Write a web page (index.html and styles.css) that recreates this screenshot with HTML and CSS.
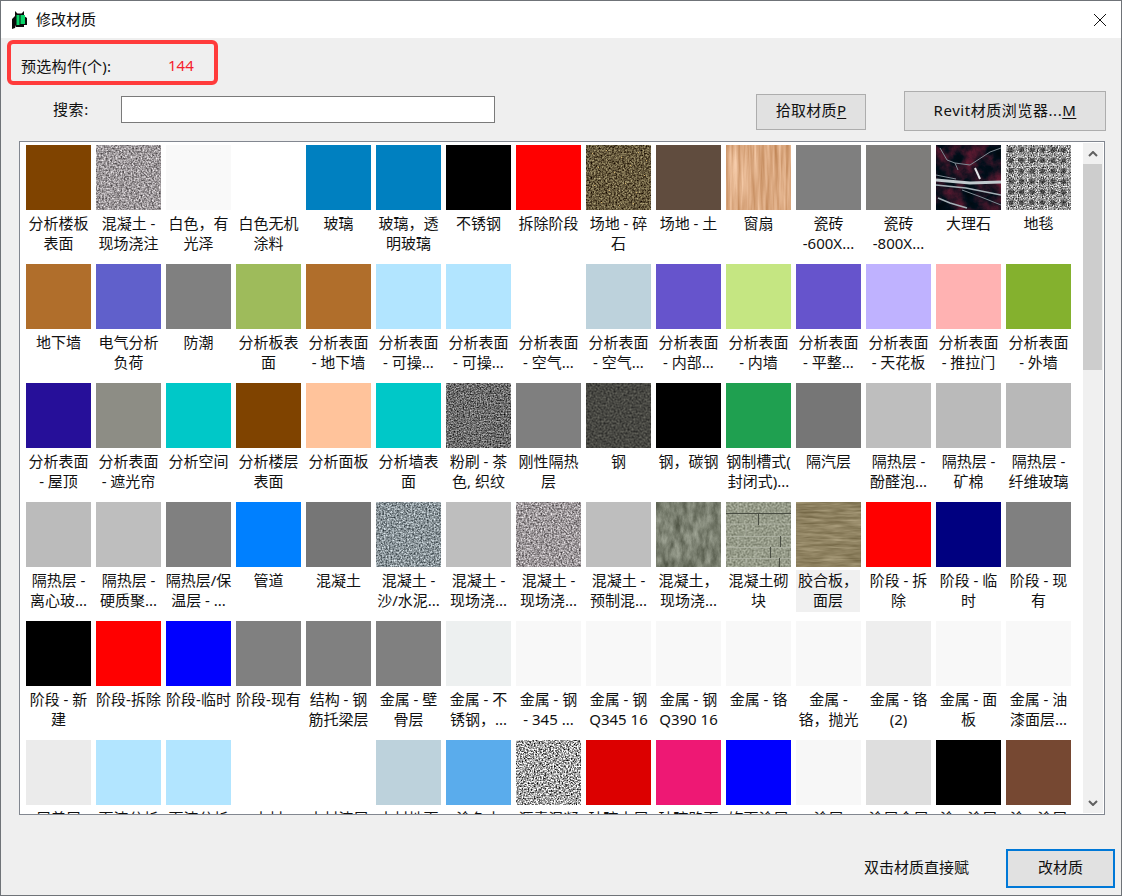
FILE: index.html
```html
<!DOCTYPE html>
<html lang="zh-CN">
<head>
<meta charset="utf-8">
<title>修改材质</title>
<link rel="stylesheet" href="styles.css">
</head>
<body>
<svg class="defs" aria-hidden="true">
  <defs>
    <filter id="f-concrete" x="0" y="0" width="100%" height="100%" color-interpolation-filters="sRGB"><feTurbulence type="fractalNoise" baseFrequency="0.6" numOctaves="2" seed="3"/><feColorMatrix values="1.05 0 0 0 .09  1.05 0 0 0 .07  1.05 0 0 0 .08  0 0 0 0 1"/></filter>
    <filter id="f-sand" x="0" y="0" width="100%" height="100%" color-interpolation-filters="sRGB"><feTurbulence type="fractalNoise" baseFrequency="0.6" numOctaves="2" seed="8"/><feColorMatrix values="1.1 0 0 0 -.01  1.1 0 0 0 .03  1.1 0 0 0 .05  0 0 0 0 1"/></filter>
    <filter id="f-dark" x="0" y="0" width="100%" height="100%" color-interpolation-filters="sRGB"><feTurbulence type="fractalNoise" baseFrequency="0.7" numOctaves="2" seed="11"/><feColorMatrix values="1.05 0 0 0 -.1  1.05 0 0 0 -.1  1.05 0 0 0 -.1  0 0 0 0 1"/></filter>
    <filter id="f-carpet" x="0" y="0" width="100%" height="100%" color-interpolation-filters="sRGB"><feTurbulence type="fractalNoise" baseFrequency="0.8" numOctaves="2" seed="17"/><feColorMatrix values="1.6 0 0 0 -.2  1.6 0 0 0 -.2  1.6 0 0 0 -.2  0 0 0 0 1"/></filter>
    <filter id="f-bw" x="0" y="0" width="100%" height="100%" color-interpolation-filters="sRGB"><feTurbulence type="fractalNoise" baseFrequency="0.65" numOctaves="2" seed="5"/><feColorMatrix values="2.1 0 0 0 -.4  2.1 0 0 0 -.4  2.1 0 0 0 -.4  0 0 0 0 1"/></filter>
    <filter id="f-gravel" x="0" y="0" width="100%" height="100%" color-interpolation-filters="sRGB"><feTurbulence type="fractalNoise" baseFrequency="0.6" numOctaves="2" seed="14"/><feColorMatrix values="1 0 0 0 -.1  1 0 0 0 -.15  .8 0 0 0 -.16  0 0 0 0 1"/></filter>
    <filter id="f-wood" x="0" y="0" width="100%" height="100%" color-interpolation-filters="sRGB"><feTurbulence type="fractalNoise" baseFrequency="0.25 0.015" numOctaves="3" seed="6"/><feColorMatrix values=".32 0 0 0 .69  .42 0 0 0 .44  .5 0 0 0 .24  0 0 0 0 1"/></filter>
    <filter id="f-steel" x="0" y="0" width="100%" height="100%" color-interpolation-filters="sRGB"><feTurbulence type="fractalNoise" baseFrequency="0.5" numOctaves="4" seed="21"/><feColorMatrix values=".38 0 0 0 .09  .38 0 0 0 .09  .34 0 0 0 .09  0 0 0 0 1"/></filter>
    <filter id="f-mottled" x="0" y="0" width="100%" height="100%" color-interpolation-filters="sRGB"><feTurbulence type="fractalNoise" baseFrequency="0.16 0.07" numOctaves="6" seed="9"/><feColorMatrix values=".42 0 0 0 .27  .42 0 0 0 .29  .42 0 0 0 .23  0 0 0 0 1"/></filter>
    <filter id="f-block" x="0" y="0" width="100%" height="100%" color-interpolation-filters="sRGB"><feTurbulence type="fractalNoise" baseFrequency="0.5" numOctaves="2" seed="2"/><feColorMatrix values=".45 0 0 0 .36  .45 0 0 0 .38  .45 0 0 0 .31  0 0 0 0 1"/></filter>
    <filter id="f-ply" x="0" y="0" width="100%" height="100%" color-interpolation-filters="sRGB"><feTurbulence type="fractalNoise" baseFrequency="0.04 0.4" numOctaves="3" seed="4"/><feColorMatrix values=".3 0 0 0 .41  .3 0 0 0 .36  .3 0 0 0 .23  0 0 0 0 1"/></filter>
    <filter id="f-blotch" x="0" y="0" width="100%" height="100%" color-interpolation-filters="sRGB"><feTurbulence type="fractalNoise" baseFrequency="0.07" numOctaves="5" seed="12"/><feColorMatrix values=".8 0 0 0 -.28  .1 0 0 0 .02  .2 0 0 0 .03  0 0 0 0 1"/></filter>
    <pattern id="p-carpet" width="10.5" height="10.5" patternUnits="userSpaceOnUse"><circle cx="5" cy="5" r="2.6" class="carpet-dot"/></pattern>
  </defs>
</svg>

<div class="window">
  <header class="titlebar">
    <svg class="app-icon" viewBox="0 0 15 19"><path class="icon-black" d="M0 9 3 6V1L5.5 3.5H9.5L12 1V6L15 8V15H12V17H4V15L3 18 0 19Z"/><path class="icon-green" d="M4.500 5H7.500V15H4.500ZM8.500 5H13V14H8.500Z"/></svg>
    <span class="title">修改材质</span>
    <svg class="close" viewBox="0 0 12 12"><path d="M0 0 12 12M12 0 0 12"/></svg>
  </header>

  <main class="content">
    <div class="preselect">
      <span class="pre-label">预选构件(个):</span>
      <span class="pre-count">144</span>
    </div>

    <div class="toolbar">
      <label class="search-label" for="search">搜索:</label>
      <input class="search-input" id="search" type="text">
      <button class="btn btn-pick" type="button">拾取材质<u>P</u></button>
      <button class="btn btn-browser" type="button">Revit材质浏览器...<u>M</u></button>
    </div>

    <section class="list">
      <div class="grid">
        <div class="item"><div class="sw c-brown"></div><div class="label">分析楼板<br>表面</div></div>
        <div class="item"><svg class="sw" viewBox="0 0 65 65"><rect class="t-concrete" width="65" height="65"/></svg><div class="label">混凝土 -<br>现场浇注</div></div>
        <div class="item"><div class="sw c-f9"></div><div class="label">白色&#65292;有<br>光泽</div></div>
        <div class="item"><div class="sw c-white"></div><div class="label">白色无机<br>涂料</div></div>
        <div class="item"><div class="sw c-glass"></div><div class="label">玻璃</div></div>
        <div class="item"><div class="sw c-glass"></div><div class="label">玻璃&#65292;透<br>明玻璃</div></div>
        <div class="item"><div class="sw c-black"></div><div class="label">不锈钢</div></div>
        <div class="item"><div class="sw c-red"></div><div class="label">拆除阶段</div></div>
        <div class="item"><svg class="sw" viewBox="0 0 65 65"><rect class="t-gravel" width="65" height="65"/><path class="specks" d="M6 8h1v1H6zM20 5h1v1h-1zM35 12h1v1h-1zM52 7h1v1h-1zM12 22h1v1h-1zM28 27h1v1h-1zM44 20h1v1h-1zM58 30h1v1h-1zM8 40h1v1H8zM23 45h1v1h-1zM39 38h1v1h-1zM50 47h1v1h-1zM15 57h1v1h-1zM33 60h1v1h-1zM47 58h1v1h-1zM60 15h1v1h-1z"/></svg><div class="label">场地 - 碎<br>石</div></div>
        <div class="item"><div class="sw c-soil"></div><div class="label">场地 - 土</div></div>
        <div class="item"><svg class="sw" viewBox="0 0 65 65"><rect class="t-wood" width="65" height="65"/></svg><div class="label">窗扇</div></div>
        <div class="item"><div class="sw c-7f"></div><div class="label">瓷砖<br>-600X...</div></div>
        <div class="item"><div class="sw c-7e"></div><div class="label">瓷砖<br>-800X...</div></div>
        <div class="item"><svg class="sw" viewBox="0 0 65 65"><rect class="marble-bg" width="65" height="65"/><rect class="t-blotch" width="65" height="65"/><path class="vein" d="M4 3 11 15 19 18 22 25M19 18 34 20 54 7 65 3M26 45 45 52 65 60M0 30 20 34"/><path class="vein-thick" d="M39 23 44 34"/><path class="vein-band" d="M0 35 34 38 65 37"/><path class="vein-mid" d="M0 40 30 43 65 50M2 53 14 58 31 63"/></svg><div class="label">大理石</div></div>
        <div class="item"><svg class="sw" viewBox="0 0 65 65"><rect class="t-carpet" width="65" height="65"/><rect class="carpet-overlay" width="65" height="65"/></svg><div class="label">地毯</div></div>

        <div class="item"><div class="sw c-ochre"></div><div class="label">地下墙</div></div>
        <div class="item"><div class="sw c-indigo"></div><div class="label">电气分析<br>负荷</div></div>
        <div class="item"><div class="sw c-80"></div><div class="label">防潮</div></div>
        <div class="item"><div class="sw c-olive"></div><div class="label">分析板表<br>面</div></div>
        <div class="item"><div class="sw c-ochre"></div><div class="label">分析表面<br>- 地下墙</div></div>
        <div class="item"><div class="sw c-sky"></div><div class="label">分析表面<br>- 可操...</div></div>
        <div class="item"><div class="sw c-sky"></div><div class="label">分析表面<br>- 可操...</div></div>
        <div class="item"><div class="sw c-white"></div><div class="label">分析表面<br>- 空气...</div></div>
        <div class="item"><div class="sw c-mist"></div><div class="label">分析表面<br>- 空气...</div></div>
        <div class="item"><div class="sw c-violet"></div><div class="label">分析表面<br>- 内部...</div></div>
        <div class="item"><div class="sw c-lime"></div><div class="label">分析表面<br>- 内墙</div></div>
        <div class="item"><div class="sw c-violet"></div><div class="label">分析表面<br>- 平整...</div></div>
        <div class="item"><div class="sw c-lilac"></div><div class="label">分析表面<br>- 天花板</div></div>
        <div class="item"><div class="sw c-pink"></div><div class="label">分析表面<br>- 推拉门</div></div>
        <div class="item"><div class="sw c-grass"></div><div class="label">分析表面<br>- 外墙</div></div>

        <div class="item"><div class="sw c-navy2"></div><div class="label">分析表面<br>- 屋顶</div></div>
        <div class="item"><div class="sw c-taupe"></div><div class="label">分析表面<br>- 遮光帘</div></div>
        <div class="item"><div class="sw c-teal"></div><div class="label">分析空间</div></div>
        <div class="item"><div class="sw c-brown"></div><div class="label">分析楼层<br>表面</div></div>
        <div class="item"><div class="sw c-peach"></div><div class="label">分析面板</div></div>
        <div class="item"><div class="sw c-teal"></div><div class="label">分析墙表<br>面</div></div>
        <div class="item"><svg class="sw" viewBox="0 0 65 65"><rect class="t-dark" width="65" height="65"/></svg><div class="label">粉刷 - 茶<br>色, 织纹</div></div>
        <div class="item"><div class="sw c-7f"></div><div class="label">刚性隔热<br>层</div></div>
        <div class="item"><svg class="sw" viewBox="0 0 65 65"><rect class="t-steel" width="65" height="65"/></svg><div class="label">钢</div></div>
        <div class="item"><div class="sw c-black"></div><div class="label">钢&#65292;碳钢</div></div>
        <div class="item"><div class="sw c-green"></div><div class="label">钢制槽式(<br>封闭式)...</div></div>
        <div class="item"><div class="sw c-76"></div><div class="label">隔汽层</div></div>
        <div class="item"><div class="sw c-be"></div><div class="label">隔热层 -<br>酚醛泡...</div></div>
        <div class="item"><div class="sw c-ba"></div><div class="label">隔热层 -<br>矿棉</div></div>
        <div class="item"><div class="sw c-b8"></div><div class="label">隔热层 -<br>纤维玻璃</div></div>

        <div class="item"><div class="sw c-bb"></div><div class="label">隔热层 -<br>离心玻...</div></div>
        <div class="item"><div class="sw c-be"></div><div class="label">隔热层 -<br>硬质聚...</div></div>
        <div class="item"><div class="sw c-80"></div><div class="label">隔热层/保<br>温层 - ...</div></div>
        <div class="item"><div class="sw c-pipe"></div><div class="label">管道</div></div>
        <div class="item"><div class="sw c-76"></div><div class="label">混凝土</div></div>
        <div class="item"><svg class="sw" viewBox="0 0 65 65"><rect class="t-sand" width="65" height="65"/></svg><div class="label">混凝土 -<br>沙/水泥...</div></div>
        <div class="item"><div class="sw c-be"></div><div class="label">混凝土 -<br>现场浇...</div></div>
        <div class="item"><svg class="sw" viewBox="0 0 65 65"><rect class="t-concrete" width="65" height="65"/></svg><div class="label">混凝土 -<br>现场浇...</div></div>
        <div class="item"><div class="sw c-be"></div><div class="label">混凝土 -<br>预制混...</div></div>
        <div class="item"><svg class="sw" viewBox="0 0 65 65"><rect class="t-mottled" width="65" height="65"/></svg><div class="label">混凝土&#65292;<br>现场浇...</div></div>
        <div class="item"><svg class="sw" viewBox="0 0 65 65"><rect class="t-block" width="65" height="65"/><path class="mortar" d="M0 22H65M0 34.500H65M0 45.500H65M0 56.500H65M12 0V11M20 22V34M12 34V45M30 45V56M20 56V65"/><path class="joint" d="M0 11.500H65M32.500 11V23M54.500 34V45M44.500 45V56M53.500 56V65"/></svg><div class="label">混凝土砌<br>块</div></div>
        <div class="item"><svg class="sw" viewBox="0 0 65 65"><rect class="t-ply" width="65" height="65"/></svg><div class="label sel">胶合板&#65292;<br>面层</div></div>
        <div class="item"><div class="sw c-red"></div><div class="label">阶段 - 拆<br>除</div></div>
        <div class="item"><div class="sw c-navy"></div><div class="label">阶段 - 临<br>时</div></div>
        <div class="item"><div class="sw c-80"></div><div class="label">阶段 - 现<br>有</div></div>

        <div class="item"><div class="sw c-black"></div><div class="label">阶段 - 新<br>建</div></div>
        <div class="item"><div class="sw c-red"></div><div class="label">阶段-拆除</div></div>
        <div class="item"><div class="sw c-blue"></div><div class="label">阶段-临时</div></div>
        <div class="item"><div class="sw c-80"></div><div class="label">阶段-现有</div></div>
        <div class="item"><div class="sw c-80"></div><div class="label">结构 - 钢<br>筋托梁层</div></div>
        <div class="item"><div class="sw c-80"></div><div class="label">金属 - 壁<br>骨层</div></div>
        <div class="item"><div class="sw c-ed"></div><div class="label">金属 - 不<br>锈钢&#65292;...</div></div>
        <div class="item"><div class="sw c-f8"></div><div class="label">金属 - 钢<br>- 345 ...</div></div>
        <div class="item"><div class="sw c-f8"></div><div class="label">金属 - 钢<br>Q345 16</div></div>
        <div class="item"><div class="sw c-f8"></div><div class="label">金属 - 钢<br>Q390 16</div></div>
        <div class="item"><div class="sw c-f8"></div><div class="label">金属 - 铬</div></div>
        <div class="item"><div class="sw c-f8"></div><div class="label">金属 -<br>铬&#65292;抛光</div></div>
        <div class="item"><div class="sw c-ee"></div><div class="label">金属 - 铬<br>(2)</div></div>
        <div class="item"><div class="sw c-f8"></div><div class="label">金属 - 面<br>板</div></div>
        <div class="item"><div class="sw c-f8"></div><div class="label">金属 - 油<br>漆面层...</div></div>

        <div class="item"><div class="sw c-eb"></div><div class="label">屋盖层</div></div>
        <div class="item"><div class="sw c-sky"></div><div class="label">面漆分析</div></div>
        <div class="item"><div class="sw c-sky"></div><div class="label">面漆分析</div></div>
        <div class="item"><div class="sw c-white"></div><div class="label">木材</div></div>
        <div class="item"><div class="sw c-white"></div><div class="label">木材漆层</div></div>
        <div class="item"><div class="sw c-mist"></div><div class="label">木材地面</div></div>
        <div class="item"><div class="sw c-azure"></div><div class="label">涂色水</div></div>
        <div class="item"><svg class="sw" viewBox="0 0 65 65"><rect class="t-bw" width="65" height="65"/></svg><div class="label">沥青混凝</div></div>
        <div class="item"><div class="sw c-crimson"></div><div class="label">玻璃土层</div></div>
        <div class="item"><div class="sw c-rose"></div><div class="label">玻璃路面</div></div>
        <div class="item"><div class="sw c-blue"></div><div class="label">饰面涂层</div></div>
        <div class="item"><div class="sw c-f7"></div><div class="label">涂层</div></div>
        <div class="item"><div class="sw c-de"></div><div class="label">涂层金属</div></div>
        <div class="item"><div class="sw c-black"></div><div class="label">涂 - 涂层</div></div>
        <div class="item"><div class="sw c-umber"></div><div class="label">涂 - 涂层</div></div>
      </div>

      <div class="scrollbar">
        <div class="arrow"><svg viewBox="0 0 10 6"><path d="M1 5 5 1 9 5"/></svg></div>
        <div class="thumb"></div>
        <div class="track"></div>
        <div class="arrow"><svg viewBox="0 0 10 6"><path d="M1 1 5 5 9 1"/></svg></div>
      </div>
    </section>

    <footer class="footer">
      <span class="hint">双击材质直接赋</span>
      <button class="btn btn-apply" type="button">改材质</button>
    </footer>
  </main>
</div>
</body>
</html>
```

FILE: styles.css
```css
* { box-sizing: border-box; }

html, body {
  margin: 0;
  padding: 0;
  width: 1122px;
  height: 896px;
  overflow: hidden;
  background: #efefef;
}

body {
  font-family: "Noto Sans", "Noto Sans CJK SC", sans-serif;
  font-size: 15px;
  color: #111;
}

.defs { width: 0; height: 0; position: absolute; }

.window {
  width: 1122px;
  height: 896px;
  border: 1px solid #6f7378;
  display: flex;
  flex-direction: column;
  background: #efefef;
}

/* Title bar */
.titlebar {
  height: 37px;
  background: #fff;
  display: flex;
  align-items: center;
  padding-left: 11px;
  padding-right: 15px;
  flex: none;
}
.app-icon { width: 15px; height: 19px; flex: none; }
.icon-black { fill: #0b0b0b; }
.icon-green { fill: #0bd46a; }
.title { margin: -2px 0 0 9px; line-height: 20px; }
.close {
  width: 12px;
  height: 12px;
  margin-left: auto;
  fill: none;
  stroke: #111;
  stroke-width: 1;
}

/* Content */
.content { flex: 1; display: flex; flex-direction: column; min-height: 0; }

.preselect {
  margin: 2px 0 0 6px;
  width: 211px;
  height: 45px;
  border: 4px solid #ff3b3b;
  border-radius: 6px;
  display: flex;
  align-items: center;
  padding: 5px 0 0 10px;
  flex: none;
}
.pre-label { width: 147px; letter-spacing: 0.3px; }
.pre-count { color: #f5222d; }

.toolbar {
  height: 40px;
  margin-top: 6px;
  display: flex;
  align-items: flex-start;
  flex: none;
}
.search-label { margin: 8px 0 0 52px; width: 68px; line-height: 20px; letter-spacing: 0.6px; }
.search-input {
  margin-top: 5px;
  width: 374px;
  height: 27px;
  border: 1px solid #7a7a7a;
  background: #fff;
  padding: 0 4px;
  outline: none;
}

.btn {
  font: inherit;
  color: #111;
  background: #e1e1e1;
  border: 1px solid #adadad;
  padding: 0 0 5px;
  flex: none;
}
.btn u { text-underline-offset: 2px; }
.btn-pick { margin: 3px 0 0 261px; width: 110px; height: 36px; letter-spacing: 0.3px; }
.btn-browser { margin-left: 38px; width: 202px; height: 40px; letter-spacing: 0.55px; padding-bottom: 4px; }

/* Material list */
.list {
  margin: 10px 0 0 18px;
  width: 1086px;
  height: 674px;
  border: 1px solid #828790;
  background: #fff;
  display: flex;
  flex: none;
  overflow: hidden;
}

.grid {
  flex: 1;
  min-width: 0;
  padding: 3px 0 0 6px;
  display: grid;
  grid-template-columns: repeat(15, 65px);
  grid-auto-rows: 119px;
  column-gap: 5px;
  overflow: hidden;
}

.item { width: 65px; height: 119px; }

.sw { display: block; width: 65px; height: 65px; }

.label {
  margin: 3px -3px 0;
  height: 42px;
  line-height: 20px;
  font-size: 15px;
  text-align: center;
  white-space: nowrap;
  color: #111;
}
.label.sel { margin: 3px 1px 0 0; background: #f0f0f0; }

.scrollbar {
  width: 20px;
  margin: 1px 1px 1px 0;
  background: #f0f0f0;
  display: flex;
  flex-direction: column;
  flex: none;
}
.arrow {
  height: 21px;
  display: flex;
  align-items: center;
  justify-content: center;
  flex: none;
}
.arrow svg {
  width: 10px;
  height: 6px;
  fill: none;
  stroke: #606060;
  stroke-width: 2;
}
.thumb { height: 206px; background: #cdcdcd; flex: none; margin-right: 1px; }
.track { flex: 1; }

/* Footer */
.footer {
  flex: 1;
  display: flex;
  align-items: flex-start;
  padding-top: 34px;
}
.hint { margin-left: 863px; width: 142px; line-height: 20px; margin-top: 8px; }
.btn-apply {
  width: 109px;
  height: 39px;
  border: 2px solid #0078d7;
  padding-bottom: 4px;
}

/* Flat swatch colours */
.c-brown { background: #7f4300; }
.c-f9 { background: #f9f9f9; }
.c-white { background: #fff; }
.c-glass { background: #0080c0; }
.c-black { background: #000; }
.c-red { background: #f00; }
.c-soil { background: #604c3e; }
.c-7f { background: #7f7f7f; }
.c-7e { background: #7e7d7b; }
.c-ochre { background: #b06e2b; }
.c-indigo { background: #6060cb; }
.c-80 { background: #808080; }
.c-olive { background: #9ebb5b; }
.c-sky { background: #b2e5ff; }
.c-mist { background: #bdd2dc; }
.c-violet { background: #6654cc; }
.c-lime { background: #c5e682; }
.c-lilac { background: #bfb2ff; }
.c-pink { background: #ffb2b2; }
.c-grass { background: #84b12e; }
.c-navy2 { background: #260f99; }
.c-taupe { background: #8d8d85; }
.c-teal { background: #00c8c8; }
.c-peach { background: #ffc39b; }
.c-green { background: #1fa050; }
.c-76 { background: #767676; }
.c-be { background: #bebebe; }
.c-bb { background: #bbb; }
.c-ba { background: #bababa; }
.c-b8 { background: #b8b8b8; }
.c-pipe { background: #0080ff; }
.c-navy { background: #000080; }
.c-blue { background: #00f; }
.c-ed { background: #edf0f0; }
.c-f8 { background: #f8f8f8; }
.c-f7 { background: #f7f7f7; }
.c-ee { background: #eee; }
.c-eb { background: #ebebeb; }
.c-azure { background: #5aacec; }
.c-crimson { background: #dc0000; }
.c-rose { background: #ee1874; }
.c-de { background: #dedede; }
.c-umber { background: #764832; }

/* Texture swatches */
.t-concrete { filter: url(#f-concrete); }
.t-sand { filter: url(#f-sand); }
.t-dark { filter: url(#f-dark); }
.t-carpet { filter: url(#f-carpet); }
.t-bw { filter: url(#f-bw); }
.t-gravel { filter: url(#f-gravel); }
.t-wood { filter: url(#f-wood); }
.t-steel { filter: url(#f-steel); }
.t-mottled { filter: url(#f-mottled); }
.t-block { filter: url(#f-block); }
.t-ply { filter: url(#f-ply); }
.t-blotch { filter: url(#f-blotch); }

.specks { fill: #d2b06a; }

.marble-bg { fill: #18161f; }
.vein, .vein-thick, .vein-band, .vein-mid { fill: none; stroke-linejoin: round; }
.vein { stroke: #7f8b94; stroke-width: 1; }
.vein-thick { stroke: #e4e8ea; stroke-width: 2; }
.vein-band { stroke: #c0cace; stroke-width: 3; }
.vein-mid { stroke: #a4b0b6; stroke-width: 1.6; }

.carpet-overlay { fill: url(#p-carpet); }
.carpet-dot { fill: #1b1b1b; opacity: 0.6; }

.mortar { fill: none; stroke: #b0b4a6; stroke-width: 1; opacity: 0.8; }
.joint { fill: none; stroke: #494d43; stroke-width: 1; }
```
